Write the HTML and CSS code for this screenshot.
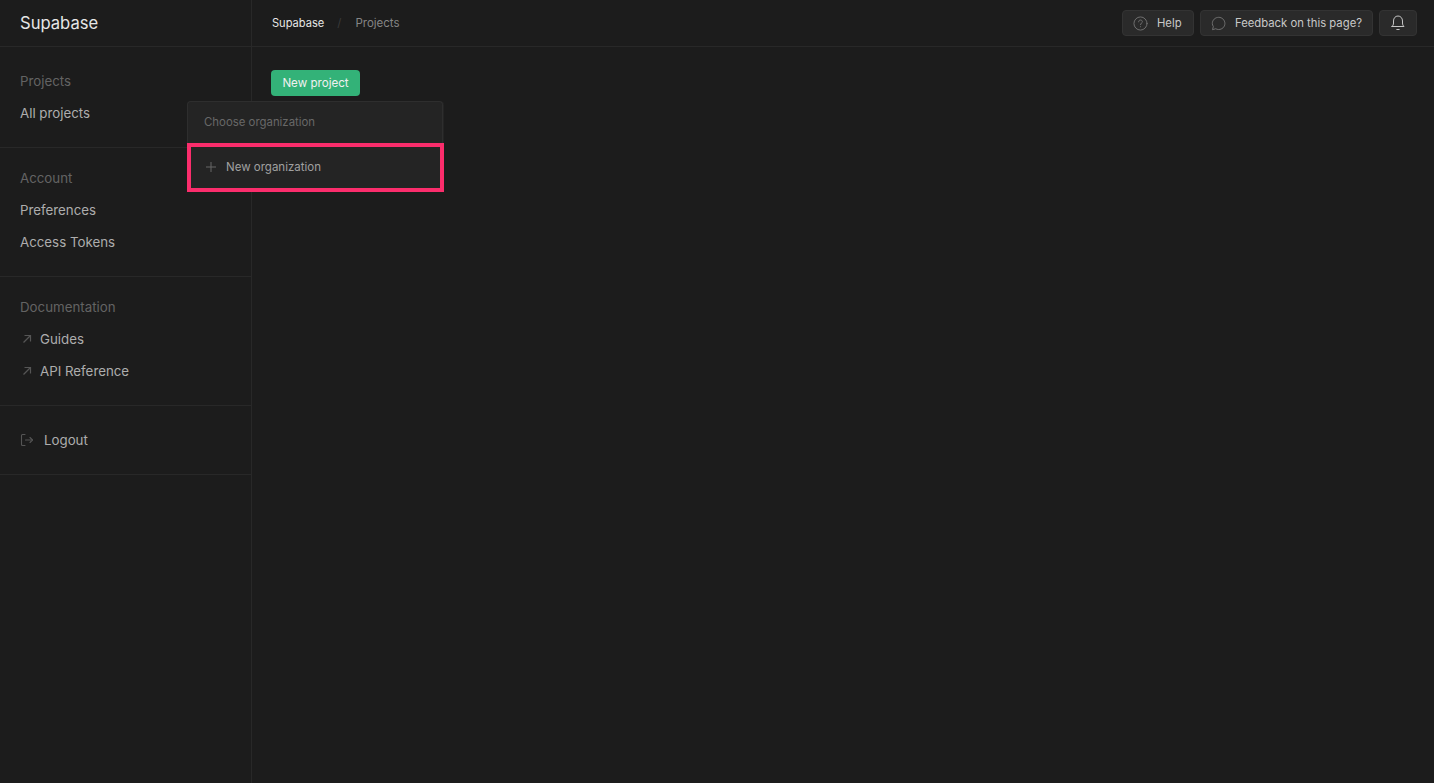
FILE: index.html

```html
<!DOCTYPE html>
<html lang="en">
<head>
    <meta charset="UTF-8">
    <meta name="viewport" content="width=device-width, initial-scale=1.0">
    <title>Supabase</title>
    <link rel="stylesheet" href="styles.css">
</head>
<body>
    <aside class="sidebar">
        <div class="brand">Supabase</div>

        <div class="side-section first">
            <div class="side-title">Projects</div>
            <a class="side-link">All projects</a>
        </div>

        <div class="side-section">
            <div class="side-title">Account</div>
            <a class="side-link">Preferences</a>
            <a class="side-link">Access Tokens</a>
        </div>

        <div class="side-section">
            <div class="side-title">Documentation</div>
            <a class="side-link">
                <svg class="side-icon" viewBox="0 0 14 14" fill="none" stroke="currentColor" stroke-width="1.2">
                    <path d="M3.5 10.5L10 4"></path>
                    <path d="M4.5 3.5H10.5V9.5"></path>
                </svg>
                Guides
            </a>
            <a class="side-link">
                <svg class="side-icon" viewBox="0 0 14 14" fill="none" stroke="currentColor" stroke-width="1.2">
                    <path d="M3.5 10.5L10 4"></path>
                    <path d="M4.5 3.5H10.5V9.5"></path>
                </svg>
                API Reference
            </a>
        </div>

        <div class="side-section first">
            <a class="side-link logout">
                <svg class="side-icon" viewBox="0 0 14 14" fill="none" stroke="currentColor" stroke-width="1.1" stroke-linecap="round" stroke-linejoin="round">
                    <path d="M5 1.5H2.5C1.8 1.5 1.5 1.9 1.5 2.5V11.5C1.5 12.1 1.8 12.5 2.5 12.5H5"></path>
                    <path d="M5.5 7H12.5"></path>
                    <path d="M10 4.5L12.5 7L10 9.5"></path>
                </svg>
                Logout
            </a>
        </div>
    </aside>

    <div class="page">
        <header class="topbar">
            <nav class="crumbs">
                <span class="crumb-current">Supabase</span>
                <span class="crumb-sep">/</span>
                <span class="crumb">Projects</span>
            </nav>
            <div class="actions">
                <button class="btn btn-help">
                    <svg class="btn-icon" viewBox="0 0 16 16" fill="none" stroke="currentColor" stroke-width="1" stroke-linecap="round">
                        <circle cx="8" cy="8" r="7"></circle>
                        <path d="M6 6.2C6 5 6.9 4.3 8 4.3C9.1 4.3 10 5 10 6.1C10 7.6 8 7.6 8 9.2"></path>
                        <path d="M8 11.4V11.5"></path>
                    </svg>
                    Help
                </button>
                <button class="btn">
                    <svg class="btn-icon" viewBox="0 0 16 16" fill="none" stroke="currentColor" stroke-width="1" stroke-linejoin="round">
                        <path d="M1.6 14.6L2.5 11.2C1.8 10.2 1.4 9.1 1.4 8C1.4 4.4 4.4 1.4 8.2 1.4C11.9 1.4 14.8 4.4 14.8 8C14.8 11.6 11.9 14.4 8.2 14.4C7 14.4 5.9 14.1 5 13.6L1.6 14.6Z"></path>
                    </svg>
                    Feedback on this page?
                </button>
                <button class="btn btn-bell">
                    <svg class="btn-icon" viewBox="0 0 16 16" fill="none" stroke="currentColor" stroke-width="1" stroke-linecap="round" stroke-linejoin="round">
                        <path d="M2 11.5C3 10.6 3.5 9.6 3.5 8V6C3.5 3.2 5.3 1 8 1C10.7 1 12.5 3.2 12.5 6V8C12.5 9.6 13 10.6 14 11.5H2Z"></path>
                        <path d="M6.8 14.5H9.2"></path>
                    </svg>
                </button>
            </div>
        </header>

        <main class="content">
            <div class="new-project">
                <button class="btn-primary">New project</button>
                <div class="dropdown">
                    <div class="dropdown-label">Choose organization</div>
                    <div class="dropdown-item">
                        <svg class="plus" viewBox="0 0 12 12" fill="none" stroke="currentColor" stroke-width="1">
                            <path d="M6 1V11"></path>
                            <path d="M1 6H11"></path>
                        </svg>
                        New organization
                    </div>
                </div>
            </div>
        </main>
    </div>
</body>
</html>
```

FILE: styles.css

```css
* {
    box-sizing: border-box;
    margin: 0;
    padding: 0;
}

html, body {
    width: 100%;
    height: 100%;
    overflow: hidden;
}

body {
    display: flex;
    background-color: #1c1c1c;
    font-family: Inter, "Noto Sans", sans-serif;
    color: #adadad;
}

/* sidebar */
.sidebar {
    width: 252px;
    flex-shrink: 0;
    border-right: 1px solid #282828;
}

.brand {
    height: 47px;
    padding-left: 20px;
    border-bottom: 1px solid #282828;
    display: flex;
    align-items: center;
    font-size: 16.6px;
    color: #e6e6e6;
}

.side-section {
    padding: 14px 0 18px;
    border-bottom: 1px solid #282828;
}

.side-section.first {
    padding-top: 18px;
}

.side-title,
.side-link {
    height: 32px;
    padding-left: 20px;
    display: flex;
    align-items: center;
    font-size: 13.3px;
}

.side-title {
    color: #636363;
}

.side-icon {
    width: 14px;
    height: 14px;
    margin-right: 6px;
    color: #555;
}

.logout .side-icon {
    margin-right: 10px;
}

/* top bar */
.page {
    flex-grow: 1;
    display: flex;
    flex-direction: column;
}

.topbar {
    height: 47px;
    padding: 0 17px 0 20px;
    border-bottom: 1px solid #282828;
    display: flex;
    justify-content: space-between;
    align-items: center;
}

.crumbs {
    display: flex;
    align-items: center;
    font-size: 11.5px;
}

.crumb-current {
    font-size: 11.1px;
    color: #e6e6e6;
}

.crumb-sep {
    margin: 0 14px 0 13px;
    color: #3a3a3a;
}

.crumb {
    color: #858585;
}

.actions {
    display: flex;
    gap: 6px;
}

.btn {
    height: 26px;
    padding: 0 10px;
    display: flex;
    align-items: center;
    gap: 9px;
    font-family: inherit;
    font-size: 11.3px;
    color: #c8c8c8;
    background-color: #2a2a2a;
    border: 1px solid #333;
    border-radius: 4px;
}

.btn-help {
    width: 72px;
}

.btn-icon {
    width: 15px;
    height: 15px;
    color: #737373;
}

.btn-bell {
    width: 38px;
    justify-content: center;
}

.btn-bell .btn-icon {
    width: 16px;
    height: 16px;
    color: #c4c4c4;
}

/* content */
.content {
    padding: 23px 19px;
}

.new-project {
    position: relative;
    display: inline-block;
}

.btn-primary {
    display: block;
    width: 89px;
    height: 26px;
    font-family: inherit;
    font-size: 11.6px;
    color: #f0f0f0;
    background-color: #33b278;
    border: none;
    border-radius: 4px;
}

.dropdown {
    position: absolute;
    top: 31px;
    left: -84px;
    width: 257px;
    background-color: #242424;
    border-radius: 4px 4px 0 0;
}

.dropdown-label {
    height: 42px;
    padding: 0 0 2px 16px;
    display: flex;
    align-items: center;
    font-size: 11.4px;
    color: #686868;
    border: 1px solid #2e2e2e;
    border-bottom: none;
    border-radius: 4px 4px 0 0;
    margin-right: 1px;
}

.dropdown-item {
    height: 49px;
    padding: 0 0 2px 14px;
    display: flex;
    align-items: center;
    gap: 9px;
    font-size: 11.5px;
    color: #a0a0a0;
    border: 4px solid #fb2d6c;
}

.plus {
    width: 12px;
    height: 12px;
    color: #666;
}
```
